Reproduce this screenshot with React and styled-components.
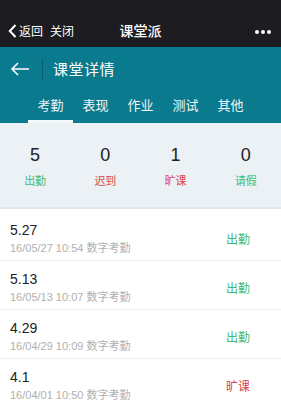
import React from "react";
import styled, { createGlobalStyle } from "styled-components";

const GlobalStyle = createGlobalStyle`
  html, body {
    margin: 0;
    padding: 0;
    background: #fff;
    font-family: "Noto Sans CJK SC", "Liberation Sans", sans-serif;
  }
`;

const stats = [
  { n: 5, label: "出勤", color: "#3fbb78" },
  { n: 0, label: "迟到", color: "#d9464b" },
  { n: 1, label: "旷课", color: "#d9464b" },
  { n: 0, label: "请假", color: "#3fbb78" },
];

const records = [
  { title: "5.27", time: "16/05/27 10:54", status: "出勤", ok: true },
  { title: "5.13", time: "16/05/13 10:07", status: "出勤", ok: true },
  { title: "4.29", time: "16/04/29 10:09", status: "出勤", ok: true },
  { title: "4.1", time: "16/04/01 10:50", status: "旷课", ok: false },
];

const tabs = ["考勤", "表现", "作业", "测试", "其他"];

const App = () => (
  <Page>
    <GlobalStyle />
    <WxBar>
      <WxLeft>
        <svg width="9" height="14" viewBox="0 0 9 14">
          <path d="M7.5 1 L1.8 7 L7.5 13" fill="none" stroke="#fff" strokeWidth="2" />
        </svg>
        <span>返回</span>
        <span className="close">关闭</span>
      </WxLeft>
      <WxTitle>课堂派</WxTitle>
      <Dots>
        <i />
        <i />
        <i />
      </Dots>
    </WxBar>
    <Header>
      <HeaderTop>
        <svg width="20" height="14" viewBox="0 0 20 14">
          <path d="M19 7 H2 M8 1 L2 7 L8 13" fill="none" stroke="#fff" strokeWidth="1.6" />
        </svg>
        <Divider />
        <HeaderTitle>课堂详情</HeaderTitle>
      </HeaderTop>
      <Tabs>
        {tabs.map((t, i) => (
          <Tab key={t} $active={i === 0}>
            {t}
          </Tab>
        ))}
      </Tabs>
    </Header>
    <Stats>
      {stats.map((s) => (
        <Stat key={s.label}>
          <Num>{s.n}</Num>
          <StatLabel $color={s.color}>{s.label}</StatLabel>
        </Stat>
      ))}
    </Stats>
    <List>
      {records.map((r) => (
        <Row key={r.time}>
          <RowText>
            <RowTitle>{r.title}</RowTitle>
            <RowSub>{r.time} 数字考勤</RowSub>
          </RowText>
          <Status $ok={r.ok}>{r.status}</Status>
        </Row>
      ))}
    </List>
  </Page>
);

export default App;

const Page = styled.div`
  width: 281px;
  height: 400px;
  overflow: hidden;
  background: #fff;
`;

const WxBar = styled.div`
  height: 47px;
  background: #1d1c21;
  color: #fff;
  display: flex;
  align-items: flex-end;
  padding: 0 10px 7px 8px;
  box-sizing: border-box;
  position: relative;
`;

const WxLeft = styled.div`
  display: flex;
  align-items: center;
  gap: 2px;
  font-size: 12px;
  line-height: 18px;
  .close {
    margin-left: 5px;
  }
`;

const WxTitle = styled.div`
  position: absolute;
  left: 0;
  right: 0;
  bottom: 7px;
  text-align: center;
  font-size: 14px;
  line-height: 20px;
  font-weight: 500;
  pointer-events: none;
`;

const Dots = styled.div`
  margin-left: auto;
  display: flex;
  gap: 2px;
  padding-bottom: 6px;
  i {
    width: 4px;
    height: 4px;
    border-radius: 50%;
    background: #fff;
  }
`;

const Header = styled.div`
  background: #0a7a8f;
  color: #fff;
`;

const HeaderTop = styled.div`
  height: 43px;
  display: flex;
  align-items: center;
  padding: 0 0 0 10px;
`;

const Divider = styled.div`
  width: 1px;
  height: 20px;
  background: rgba(0, 0, 0, 0.25);
  margin: 0 10px 0 12px;
`;

const HeaderTitle = styled.div`
  font-size: 15px;
  letter-spacing: 0.5px;
`;

const Tabs = styled.div`
  display: flex;
  padding-left: 28px;
  height: 33px;
`;

const Tab = styled.div`
  width: 45px;
  text-align: center;
  font-size: 13px;
  line-height: 30px;
  color: ${(p) => (p.$active ? "#e9f4f6" : "#f2f7f8")};
  border-bottom: 3px solid ${(p) => (p.$active ? "#f4fafb" : "transparent")};
  box-sizing: border-box;
`;

const Stats = styled.div`
  height: 86px;
  background: #ebf1f4;
  border-bottom: 2px solid #e0e7eb;
  display: grid;
  grid-template-columns: repeat(4, 1fr);
  align-items: center;
  box-sizing: border-box;
`;

const Stat = styled.div`
  display: flex;
  flex-direction: column;
  align-items: center;
  padding-top: 2px;
`;

const Num = styled.div`
  font-family: "Liberation Sans", sans-serif;
  font-size: 18px;
  line-height: 22px;
  color: #222;
`;

const StatLabel = styled.div`
  font-size: 11px;
  line-height: 16px;
  margin-top: 6px;
  color: ${(p) => p.$color};
`;

const List = styled.div`
  padding-top: 3px;
`;

const Row = styled.div`
  height: 49px;
  display: flex;
  align-items: center;
  padding: 5px 31px 0 10px;
  border-bottom: 1px solid #eeeeee;
  box-sizing: border-box;
`;

const RowText = styled.div`
  flex: 1;
`;

const RowTitle = styled.div`
  font-family: "Liberation Sans", sans-serif;
  font-size: 14px;
  line-height: 18px;
  color: #222;
`;

const RowSub = styled.div`
  font-family: "Liberation Sans", "Noto Sans CJK SC", sans-serif;
  font-size: 11px;
  line-height: 16px;
  color: #b0b0b0;
  margin-top: 1px;
`;

const Status = styled.div`
  font-size: 12px;
  color: ${(p) => (p.$ok ? "#3fbb78" : "#d9464b")};
`;
